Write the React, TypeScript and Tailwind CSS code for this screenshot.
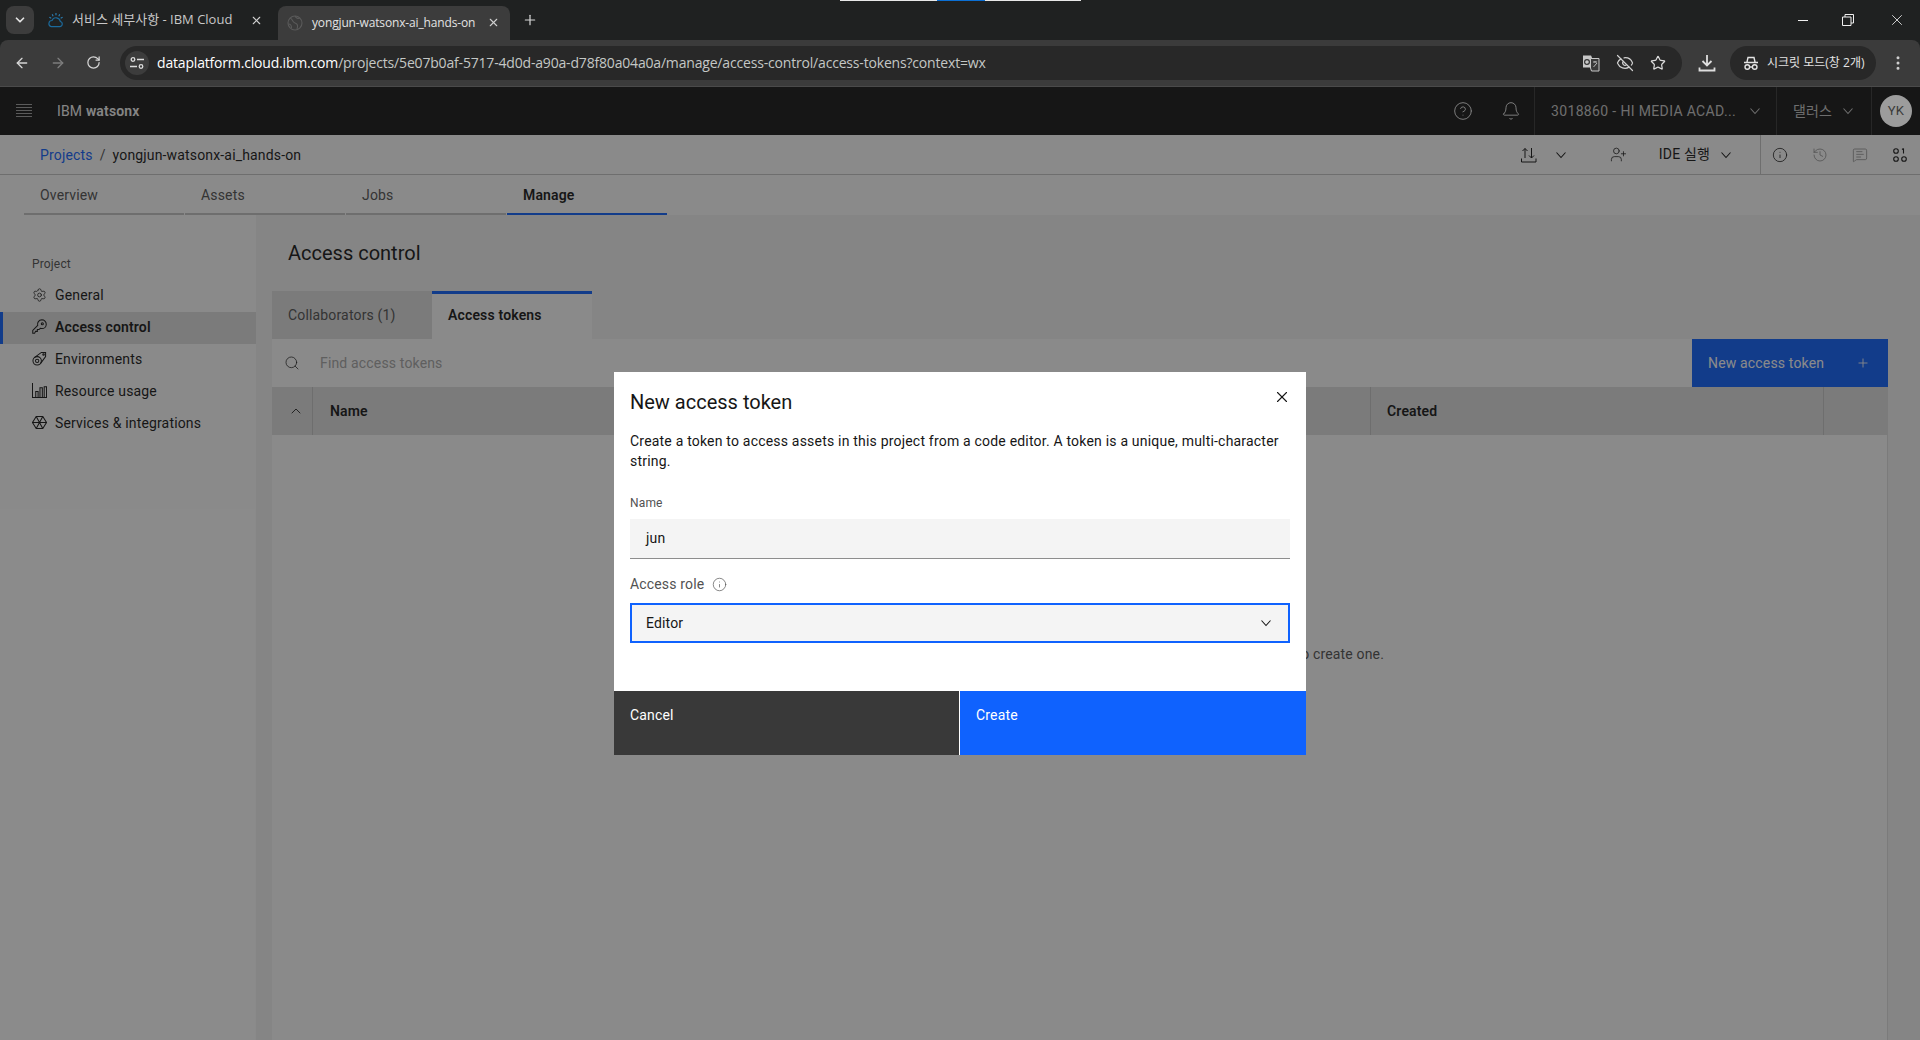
import React from "react";
import { ArrowLeft, ArrowRight, RotateCw, ChevronDown, ChevronUp, X, Plus, Star, EyeOff, Search, Bell, CircleHelp, Info, History, MessageSquareText, UserPlus, Settings, EllipsisVertical } from "lucide-react";

function Chev({ className = "" }: { className?: string }) {
  return (
    <svg viewBox="0 0 16 16" width="16" height="16" fill="none" stroke="currentColor" strokeWidth="1.1" className={className}>
      <path d="M3.5 5.5 8 10.5l4.5-5" />
    </svg>
  );
}

function IbmCloudFav() {
  return (
    <svg viewBox="0 0 18 18" width="17" height="17" fill="none" strokeWidth="1.2">
      <path d="M4.500 15.500h9a2.800 2.800 0 0 0 .6-5.500 4.600 4.600 0 0 0-8.800-1A3.300 3.300 0 0 0 4.500 15.500Z" stroke="#1b6a9c" />
      <path d="M9.500 1v2.500M5.500 2.500 6.500 4.500M13.500 2.500l-1 2M2.500 5.500l2 1M16.500 5.500l-2 1" stroke="#2a7fb5" />
    </svg>
  );
}

function GlobeFav() {
  return (
    <svg viewBox="0 0 16 16" width="16" height="16" fill="none" stroke="#5a5a5a" strokeWidth="1.1" className="shrink-0">
      <circle cx="8" cy="8" r="7" />
      <path d="M3 3c3 1 2 4 5 5s3 3 2 6M13 3c-2 1-4 0-5-2M1.500 9c2 0 3 1 3 4" />
    </svg>
  );
}

function SiteInfo() {
  return (
    <svg viewBox="0 0 16 16" width="16" height="16" fill="none" stroke="#dcdcdc" strokeWidth="1.3">
      <circle cx="4" cy="4.500" r="1.800" />
      <path d="M8 4.500h7M1 11.500h7" />
      <circle cx="12" cy="11.500" r="1.800" />
    </svg>
  );
}

function TranslateIcon() {
  return (
    <svg viewBox="0 0 18 18" width="18" height="18">
      <path d="M1 1.500h8l1 2v10H1Z" fill="#c7c7c7" />
      <path d="M8.500 4.500h8.500v12.500H9.500L8.500 14Z" fill="#3a3a3a" stroke="#c7c7c7" strokeWidth="1" />
      <circle cx="5" cy="8" r="2.400" fill="none" stroke="#333" strokeWidth="1.200" />
      <path d="M11 8h4M13 7v1.500M11.500 13l3.500-4" stroke="#c7c7c7" strokeWidth="0.9" fill="none" />
    </svg>
  );
}

function Incognito() {
  return (
    <svg viewBox="0 0 16 16" width="16" height="16" fill="none" stroke="#e3e3e3" strokeWidth="1.400">
      <path d="M4 7 5 2.500h6L12 7M1 7.500h14" />
      <circle cx="4.300" cy="12" r="2.300" />
      <circle cx="11.700" cy="12" r="2.300" />
      <path d="M6.600 12h2.800" />
    </svg>
  );
}

function DownloadIcon() {
  return (
    <svg viewBox="0 0 18 18" width="18" height="18" fill="none" stroke="#dedede" strokeWidth="1.800">
      <path d="M9 1v10M4.500 7 9 11.500 13.500 7M1.500 13.500V16.500h15v-3" />
    </svg>
  );
}

function Hamburger() {
  return (
    <svg viewBox="0 0 16 14" width="16" height="14" fill="none" stroke="#a0a0a0" strokeWidth="1">
      <path d="M0 .5h16M0 3.500h16M0 6.500h16M0 9.500h16M0 12.500h16" />
    </svg>
  );
}

function TransferIcon() {
  return (
    <svg viewBox="0 0 16 16" width="16" height="16" fill="none" stroke="#161616" strokeWidth="1">
      <path d="M.5 11.500v3.500h14.500v-3.500M4 11V1.500M1.500 4 4 1.500 6.500 4M10.500 1v10M8 8.500l2.500 2.500L13 8.500" />
    </svg>
  );
}

function ZeroOne() {
  return (
    <svg viewBox="0 0 16 16" width="16" height="16" fill="none" stroke="#161616" strokeWidth="1.100">
      <circle cx="4" cy="4" r="2.300" />
      <path d="M11.500 1.500v5M10 2.500l1.500-1" />
      <circle cx="4" cy="12" r="2.300" />
      <circle cx="12" cy="12" r="2.300" />
    </svg>
  );
}

function KeyIcon() {
  return (
    <svg viewBox="0 0 16 16" width="15" height="15" fill="none" stroke="#161616" strokeWidth="1.100">
      <path d="M10.500.8a4.700 4.700 0 0 1 0 9.400c-.6 0-1.100-.1-1.600-.3L7.500 11.300H5.700v1.900H3.800l-1 1.900H.8v-2.900l5.300-5.300a4.700 4.700 0 0 1 4.400-6.100Z" />
      <circle cx="11" cy="5" r="1.100" />
    </svg>
  );
}

function EnvIcon() {
  return (
    <svg viewBox="0 0 16 16" width="15" height="15" fill="none" stroke="#161616" strokeWidth="1.100">
      <circle cx="5.500" cy="10.500" r="4.500" />
      <circle cx="5.500" cy="10.500" r="1.800" />
      <path d="M2.500 7 10 1.500h4.500V6L9 13.500" />
      <circle cx="12.300" cy="3.700" r="0.800" />
    </svg>
  );
}

function UsageIcon() {
  return (
    <svg viewBox="0 0 16 16" width="15" height="15" fill="none" stroke="#161616" strokeWidth="1.100">
      <path d="M.5 0v15.500H16M4 15V9h2.500v6M8.500 15V5H11v10M13 15V4h2.500v11" />
    </svg>
  );
}

function ServicesIcon() {
  return (
    <svg viewBox="0 0 16 16" width="15" height="15" fill="none" stroke="#161616" strokeWidth="1.100">
      <path d="M4.500 1.500h7L15.500 8l-4 6.500h-7L.5 8Z" />
      <path d="M.5 8h15M4.500 1.500l7 13M11.500 1.500l-7 13" />
    </svg>
  );
}

const navItems = [
  { label: "General", icon: <Settings size={16} strokeWidth={1.2} color="#161616" /> },
  { label: "Access control", icon: <KeyIcon />, active: true },
  { label: "Environments", icon: <EnvIcon /> },
  { label: "Resource usage", icon: <UsageIcon /> },
  { label: "Services & integrations", icon: <ServicesIcon /> },
];

function ChromeBar() {
  return (
    <div className="bg-[#1f2121] text-[#e3e3e3] font-['Open_Sans','Noto_Sans_CJK_KR',sans-serif] tracking-[0px]">
      <div className="relative h-[40px] flex pt-[6px] pl-[6px]">
        <div className="absolute top-0 left-[840px] w-[241px] h-[1px] bg-[#e8e8e8] flex justify-center">
          <div className="w-[48px] h-[1px] bg-[#0b6fd4]" />
        </div>
        <div className="w-[28px] h-[28px] rounded-lg bg-[#3c3c3c] flex items-center justify-center">
          <ChevronDown size={14} strokeWidth={3} color="#e3e3e3" />
        </div>
        <div className="w-[244px] h-[34px] flex items-center pl-[13px] pr-[15px] pb-[6px] gap-[8px]">
          <IbmCloudFav />
          <span className="text-[13px] text-[#c8c8c8] flex-1 whitespace-nowrap overflow-hidden">서비스 세부사항 - IBM Cloud</span>
          <X size={13} strokeWidth={2} color="#d0d0d0" />
        </div>
        <div className="w-[232px] h-[34px] rounded-t-lg bg-[#3c3c3c] flex items-center pl-[9px] pr-[10px] pb-[1px] gap-[9px]">
          <GlobeFav />
          <span className="text-[12px] tracking-[-0.15px] text-[#e3e3e3] whitespace-nowrap">yongjun-watsonx-ai_hands-on</span>
          <X size={13} strokeWidth={2} color="#d0d0d0" className="ml-auto shrink-0" />
        </div>
        <div className="w-[40px] h-[28px] flex items-center justify-center">
          <Plus size={16} strokeWidth={1.8} color="#d8d8d8" />
        </div>
        <div className="flex-1" />
        <div className="h-[28px] flex items-center pr-[14px] gap-[34px]">
          <div className="w-[10px] h-[1px] bg-[#f0f0f0]" />
          <svg viewBox="0 0 12 12" width="12" height="12" fill="none" stroke="#f0f0f0" strokeWidth="1">
            <path d="M.5 3h8.500v8.500H.5ZM3 3V.5h8.500V9H9" />
          </svg>
          <X size={18} strokeWidth={1.1} color="#f0f0f0" />
        </div>
      </div>
      <div className="h-[47px] bg-[#3b3b3b] rounded-t-lg border-b border-[#4a4a4a] flex items-center pb-[1px]">
        <div className="w-[120px] flex items-center pl-[14px] gap-[20px]">
          <ArrowLeft size={16} strokeWidth={2} color="#d6d6d6" />
          <ArrowRight size={16} strokeWidth={2} color="#7d7d7d" />
          <RotateCw size={15} strokeWidth={2} color="#d6d6d6" />
        </div>
        <div className="w-[1562px] h-[34px] rounded-full bg-[#282828] flex items-center pl-[5px] pr-[16px]">
          <div className="w-[24px] h-[24px] rounded-full bg-[#3c3c3c] flex items-center justify-center">
            <SiteInfo />
          </div>
          <div className="ml-[8px] text-[14px] tracking-[-0.18px] flex-1 whitespace-nowrap">
            <span className="text-white">dataplatform.cloud.ibm.com</span>
            <span className="text-[#c4c7c5]">/projects/5e07b0af-5717-4d0d-a90a-d78f80a04a0a/manage/access-control/access-tokens?context=wx</span>
          </div>
          <div className="flex items-center gap-[16px]">
            <TranslateIcon />
            <EyeOff size={18} strokeWidth={1.6} color="#d0d0d0" />
            <Star size={16} strokeWidth={1.8} color="#dcdcdc" />
          </div>
        </div>
        <div className="w-[48px] flex justify-center pl-[2px]">
          <DownloadIcon />
        </div>
        <div className="w-[146px] h-[34px] rounded-full bg-[#282828] flex items-center pl-[13px] gap-[8px]">
          <Incognito />
          <span className="text-[12px] whitespace-nowrap text-[#e3e3e3]">시크릿 모드(창 2개)</span>
        </div>
        <div className="flex-1 flex justify-center">
          <EllipsisVertical size={18} strokeWidth={2} color="#cfcfcf" />
        </div>
      </div>
    </div>
  );
}

function IbmHeader() {
  return (
    <div className="h-[48px] bg-[#161616] flex items-stretch text-[14px] text-[#c6c6c6]">
      <div className="w-[57px] flex items-center pl-[16px]">
        <Hamburger />
      </div>
      <div className="flex items-center text-[#f4f4f4]">
        <span>IBM&nbsp;</span>
        <span className="font-semibold">watsonx</span>
      </div>
      <div className="flex-1" />
      <div className="w-[48px] flex items-center justify-center">
        <CircleHelp size={20} strokeWidth={1.1} color="#f4f4f4" />
      </div>
      <div className="w-[48px] flex items-center justify-center border-r border-[#393939]">
        <Bell size={20} strokeWidth={1.1} color="#f4f4f4" />
      </div>
      <div className="w-[242px] flex items-center pl-[16px] border-r border-[#393939] gap-[10px]">
        <span className="w-[186px] whitespace-nowrap overflow-hidden tracking-[0.35px]">3018860 - HI MEDIA ACAD...</span>
        <Chev />
      </div>
      <div className="w-[95px] flex items-center pl-[16px] border-r border-[#393939] gap-[8px]">
        <span>댈러스</span>
        <Chev />
      </div>
      <div className="flex-1 max-w-[48px] flex items-center justify-center">
        <div className="relative z-20 w-[32px] h-[32px] rounded-full bg-[#9c9c9c] flex items-center justify-center text-[13px] text-[#3a3a3a]">YK</div>
      </div>
    </div>
  );
}

function SubBar() {
  return (
    <div className="h-[40px] bg-white border-b border-[#c6c6c6] flex items-center text-[14px] text-[#161616]">
      <div className="pl-[40px] pt-[1px] flex items-center gap-[7px] flex-1 whitespace-nowrap">
        <span className="text-[#0f62fe]">Projects</span>
        <span className="text-[#525252]">/</span>
        <span>yongjun-watsonx-ai_hands-on</span>
      </div>
      <div className="flex items-center h-full">
        <TransferIcon />
        <Chev className="ml-[16px]" />
        <UserPlus size={17} strokeWidth={1.1} color="#161616" className="ml-[41px]" />
        <span className="ml-[32px] whitespace-nowrap">IDE 실행</span>
        <Chev className="ml-[8px]" />
        <div className="ml-[26px] h-full border-l border-[#c6c6c6] flex items-center pl-[11px] gap-[24px] w-[160px]">
          <Info size={16} strokeWidth={1.2} color="#161616" />
          <History size={16} strokeWidth={1.2} color="#8d8d8d" />
          <MessageSquareText size={16} strokeWidth={1.2} color="#8d8d8d" />
          <ZeroOne />
        </div>
      </div>
    </div>
  );
}

function TopTabs() {
  const tabs = ["Overview", "Assets", "Jobs", "Manage"];
  return (
    <div className="h-[40px] bg-white flex pl-[24px] gap-[1px] text-[14px]">
      {tabs.map((t) => (
        <div
          key={t}
          className={
            t === "Manage"
              ? "w-[160px] border-b-2 border-[#0f62fe] pl-[16px] pt-[2px] flex items-center font-semibold text-[#161616]"
              : "w-[160px] border-b-2 border-[#c6c6c6] pl-[16px] pt-[2px] flex items-center text-[#525252]"
          }
        >
          {t}
        </div>
      ))}
    </div>
  );
}

function Sidebar() {
  return (
    <div className="w-[256px] bg-white pt-[41px] text-[14px] text-[#161616]">
      <div className="pl-[32px] text-[12px] text-[#525252] leading-[16px] mb-[8px]">Project</div>
      {navItems.map((n) => (
        <div
          key={n.label}
          className={
            n.active
              ? "h-[32px] flex items-center pl-[29px] gap-[8px] border-l-[3px] border-[#0f62fe] bg-[#e0e0e0] font-semibold"
              : "h-[32px] flex items-center pl-[32px] gap-[8px]"
          }
        >
          <div className="w-[15px] -mt-[3px] flex justify-center">{n.icon}</div>
          <span className="-mt-[1px]">{n.label}</span>
        </div>
      ))}
    </div>
  );
}

function Main() {
  return (
    <div className="flex-1 bg-[#f4f4f4] pl-[16px] pr-[32px] flex flex-col text-[14px] text-[#161616]">
      <div className="h-[76px] pl-[16px] pt-[24px] text-[20px] leading-[28px] tracking-[0px] text-[#161616]">Access control</div>
      <div className="h-[48px] flex">
        <div className="w-[160px] bg-[#e0e0e0] pl-[16px] flex items-center text-[#525252]">Collaborators (1)</div>
        <div className="w-[160px] bg-white border-t-[3px] border-[#0f62fe] pl-[16px] flex items-center font-semibold">
          <span className="-mt-[2px]">Access tokens</span>
        </div>
      </div>
      <div className="h-[48px] bg-white flex items-center">
        <Search size={16} strokeWidth={1.1} color="#161616" className="ml-[12px]" />
        <span className="ml-[20px] flex-1 text-[#a8a8a8]">Find access tokens</span>
        <div className="w-[196px] h-full bg-[#0f62fe] flex items-center justify-between pl-[16px] pr-[18px] text-white">
          <span>New access token</span>
          <Plus size={14} strokeWidth={1.5} color="#ffffff" />
        </div>
      </div>
      <div className="h-[48px] bg-[#e0e0e0] flex items-center font-semibold">
        <div className="w-[41px] h-full flex items-center justify-end pr-[8px] border-r border-[#c6c6c6]">
          <ChevronUp size={16} strokeWidth={1.3} color="#161616" />
        </div>
        <div className="w-[1057px] pl-[17px]">Name</div>
        <div className="w-[453px] h-full pl-[16px] flex items-center border-l border-[#c6c6c6]">Created</div>
        <div className="flex-1 h-full border-l border-[#c6c6c6]" />
      </div>
      <div className="flex-1 bg-white border-r border-[#e0e0e0] flex justify-end pt-[209px] pr-[503px] text-[#525252] whitespace-nowrap">
        <span className="leading-[20px] h-[20px]">Click New access token to create one.</span>
      </div>
    </div>
  );
}

function Modal() {
  return (
    <div className="absolute z-30 left-[614px] top-[372px] w-[692px] h-[383px] bg-white flex flex-col text-[#161616]">
      <div className="flex-1 px-[16px] pt-[16px]">
        <div className="flex justify-between">
          <div className="text-[20px] leading-[28px] tracking-[0px]">New access token</div>
          <X size={18} strokeWidth={1.5} color="#161616" className="-mr-[1px]" />
        </div>
        <p className="mt-[15px] text-[14px] leading-[20px] tracking-[0.2px] w-[660px]">
          Create a token to access assets in this project from a code editor. A token is a unique, multi-character string.
        </p>
        <div className="mt-[24px] text-[12px] leading-[16px] text-[#525252]">Name</div>
        <div className="mt-[8px] h-[40px] bg-[#f4f4f4] border-b border-[#8d8d8d] flex items-center pl-[16px] text-[14px]">jun</div>
        <div className="mt-[15px] h-[20px] flex items-center gap-[8px] text-[14px] text-[#525252]">
          <span>Access role</span>
          <Info size={15} strokeWidth={1.1} color="#525252" />
        </div>
        <div className="mt-[9px] h-[40px] bg-[#f4f4f4] border-2 border-[#0f62fe] flex items-center justify-between pl-[14px] pr-[14px] text-[14px]">
          <span>Editor</span>
          <Chev />
        </div>
      </div>
      <div className="h-[64px] flex gap-[1px] text-[14px] text-white">
        <div className="w-[345px] bg-[#393939] pl-[16px] pt-[14px] leading-[20px]">Cancel</div>
        <div className="flex-1 bg-[#0f62fe] pl-[16px] pt-[14px] leading-[20px]">Create</div>
      </div>
    </div>
  );
}

export default function App() {
  return (
    <div className="relative w-[1920px] h-[1040px] overflow-hidden flex flex-col bg-white tracking-[0.16px] font-['Roboto','Noto_Sans_CJK_KR',sans-serif]">
      <ChromeBar />
      <IbmHeader />
      <SubBar />
      <TopTabs />
      <div className="flex-1 flex">
        <Sidebar />
        <Main />
      </div>
      <div className="absolute left-0 right-0 top-[87px] bottom-0 z-10 bg-[#161616]/50" />
      <Modal />
    </div>
  );
}
